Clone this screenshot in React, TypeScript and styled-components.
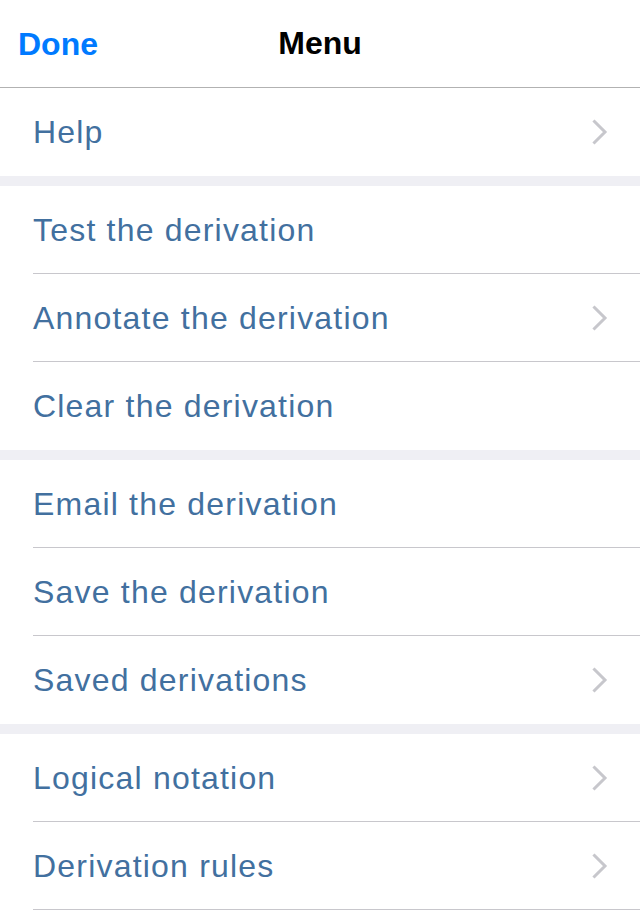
import React from 'react';
import styled, { createGlobalStyle } from 'styled-components';

type Item = { label: string; chevron?: boolean };

const groups: Item[][] = [
  [{ label: 'Help', chevron: true }],
  [
    { label: 'Test the derivation' },
    { label: 'Annotate the derivation', chevron: true },
    { label: 'Clear the derivation' },
  ],
  [
    { label: 'Email the derivation' },
    { label: 'Save the derivation' },
    { label: 'Saved derivations', chevron: true },
  ],
  [
    { label: 'Logical notation', chevron: true },
    { label: 'Derivation rules', chevron: true },
  ],
];

const Chevron: React.FC = () => (
  <ChevronIcon viewBox="0 0 16 26" aria-hidden>
    <path d="M2.5 2.5 L13 13 L2.5 23.5" />
  </ChevronIcon>
);

export default function App() {
  return (
    <>
      <GlobalStyle />
      <Screen>
        <NavBar>
          <DoneButton>Done</DoneButton>
          <Title>Menu</Title>
        </NavBar>
        {groups.map((group, gi) => (
          <Group key={gi} $first={gi === 0} $last={gi === groups.length - 1}>
            {group.map((item) => (
              <Row key={item.label}>
                <Label>{item.label}</Label>
                {item.chevron && <Chevron />}
              </Row>
            ))}
          </Group>
        ))}
      </Screen>
    </>
  );
}

const GlobalStyle = createGlobalStyle`
  html, body {
    margin: 0;
    padding: 0;
    background: #ffffff;
  }
  body {
    font-family: "Liberation Sans", Arial, sans-serif;
    -webkit-font-smoothing: antialiased;
  }
`;

const Screen = styled.div`
  width: 640px;
  min-height: 920px;
  background: #ffffff;
  display: flex;
  flex-direction: column;
`;

const NavBar = styled.header`
  position: relative;
  height: 88px;
  display: flex;
  align-items: center;
  justify-content: center;
  border-bottom: 1px solid #b2b2b2;
  box-sizing: border-box;
`;

const DoneButton = styled.button`
  position: absolute;
  left: 18px;
  top: 50%;
  transform: translateY(-50%);
  margin: 0;
  padding: 0;
  border: none;
  background: none;
  color: #007aff;
  font-family: inherit;
  font-size: 32px;
  font-weight: 700;
`;

const Title = styled.h1`
  margin: 0;
  color: #000000;
  font-size: 32px;
  font-weight: 700;
`;

const Group = styled.section<{ $first: boolean; $last: boolean }>`
  background: #ffffff;
  border-top: ${({ $first }) => ($first ? 'none' : '10px solid #efeff4')};

  & > div:last-child {
    border-bottom: ${({ $last }) => ($last ? '1px solid #c8c7cc' : 'none')};
  }
`;

const Row = styled.div`
  height: 88px;
  box-sizing: border-box;
  margin-left: 33px;
  padding-right: 32px;
  display: flex;
  align-items: center;
  justify-content: space-between;
  border-bottom: 1px solid #c8c7cc;
`;

const Label = styled.span`
  color: #42709f;
  font-size: 32px;
  font-weight: 400;
  letter-spacing: 1.2px;
  line-height: 1;
`;

const ChevronIcon = styled.svg`
  width: 16px;
  height: 26px;
  fill: none;
  stroke: #c7c7cc;
  stroke-width: 3px;
  stroke-linecap: square;
`;
